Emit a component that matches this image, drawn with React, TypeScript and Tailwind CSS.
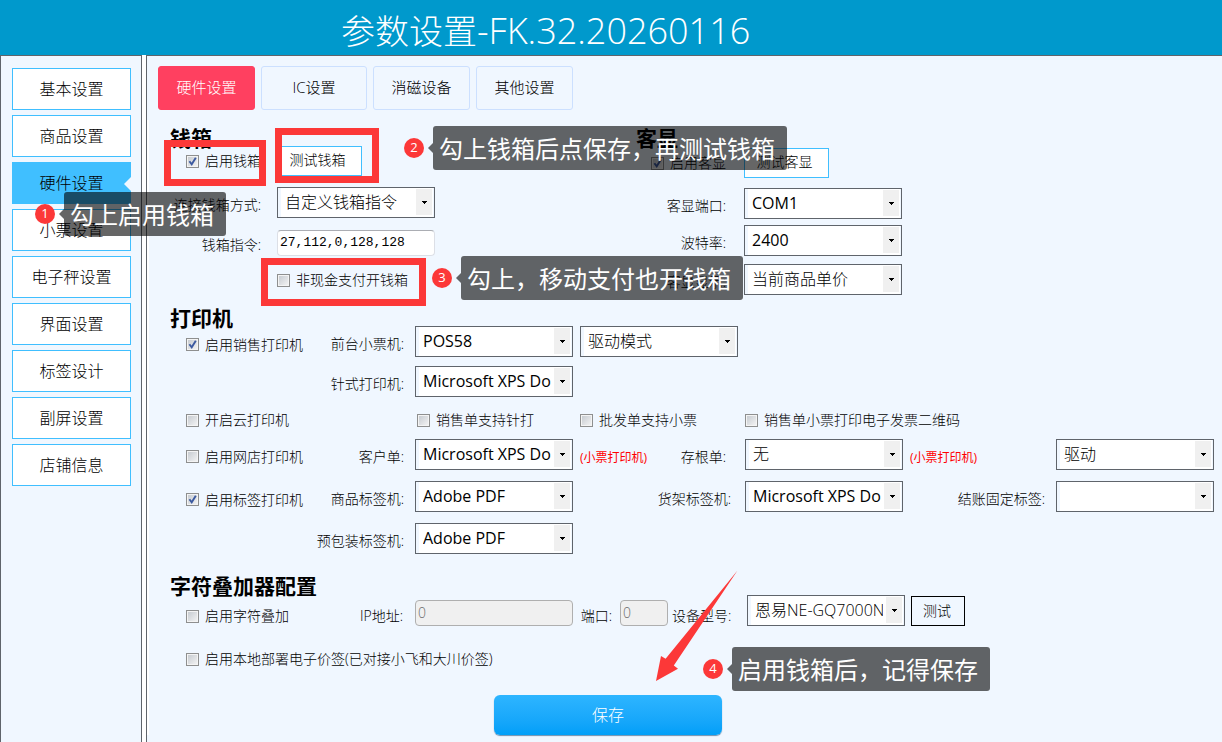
import React, { ReactNode } from "react";

const sideMenu = [
  "基本设置",
  "商品设置",
  "硬件设置",
  "小票设置",
  "电子秤设置",
  "界面设置",
  "标签设计",
  "副屏设置",
  "店铺信息",
];

const tabs = [
  { name: "硬件设置", width: "w-[97px]" },
  { name: "IC设置", width: "w-[106px]" },
  { name: "消磁设备", width: "w-[97px]" },
  { name: "其他设置", width: "w-[97px]" },
];

const printerRow =
  "grid grid-cols-[119px_110px_165px_165px_165px_146px_158px] items-center pl-4";

const Select = ({
  id,
  value,
  labelledBy,
  light = false,
}: {
  id: string;
  value: string;
  labelledBy?: string;
  light?: boolean;
}) => (
  <div className="relative h-[31px] w-[158px] shrink-0">
    <select
      id={id}
      aria-labelledby={labelledBy}
      className={`h-full w-full appearance-none border border-[#5f646b] bg-white pr-[21px] pb-px pl-[7px] text-base leading-5 text-black shadow-[inset_3px_0_0_#f0f7ff,inset_-1px_0_0_#f0f7ff] ${
        light ? "font-light" : "font-normal"
      }`}
    >
      <option>{value}</option>
    </select>
    <span className="pointer-events-none absolute top-[2px] right-[3px] bottom-[3px] flex w-4 items-center justify-center bg-[#f0f0f0]">
      <svg width="5" height="3" viewBox="0 0 5 3">
        <path d="M0 0H5V1H4V2H3V3H2V2H1V1H0Z" fill="#000" />
      </svg>
    </span>
  </div>
);

const CheckBox = ({
  id,
  label,
  checked = false,
}: {
  id: string;
  label: string;
  checked?: boolean;
}) => (
  <div className="flex items-center gap-[6px] whitespace-nowrap">
    <span className="relative flex h-[13px] w-[13px]">
      <input
        id={id}
        type="checkbox"
        defaultChecked={checked}
        className="peer h-[13px] w-[13px] appearance-none border border-[#8e8f8f] bg-linear-to-br from-[#c3c8ce] to-[#f6f6f6] shadow-[inset_0_0_0_1px_#f4f4f4]"
      />
      <svg
        className="pointer-events-none absolute top-0 left-0 hidden peer-checked:block"
        width="13"
        height="13"
        viewBox="0 0 13 13"
      >
        <path
          d="M3.4 6.2L5.7 9.3L9.8 2.8"
          fill="none"
          stroke="#3c5aa0"
          strokeWidth="1.9"
        />
      </svg>
    </span>
    <label htmlFor={id} className="text-sm leading-5">
      {label}
    </label>
  </div>
);

const FieldLabel = ({
  id,
  htmlFor,
  children,
}: {
  id?: string;
  htmlFor: string;
  children: ReactNode;
}) => (
  <label
    id={id}
    htmlFor={htmlFor}
    className="pt-1 text-right text-sm leading-5 whitespace-nowrap"
  >
    {children}
  </label>
);

const Title = ({ children }: { children: ReactNode }) => (
  <h2 className="text-[21px] leading-5 font-bold text-black">{children}</h2>
);

const Callout = ({
  no,
  text,
  place,
}: {
  no: number;
  text: string;
  place: string;
}) => (
  <div
    className={`pointer-events-none absolute flex items-center font-normal text-white ${place}`}
  >
    <span className="flex h-5 w-5 items-center justify-center rounded-full bg-[#fc3838] text-[13px]">
      {no}
    </span>
    <svg className="ml-1" width="5" height="10" viewBox="0 0 5 10">
      <path d="M5 0V10L0 5Z" fill="#000" fillOpacity="0.6" />
    </svg>
    <span className="h-11 rounded-[3px] bg-black/60 px-[6px] pr-3 text-2xl leading-[46px] whitespace-nowrap">
      {text}
    </span>
  </div>
);

const App = () => {
  return (
    <div className="relative flex min-h-screen flex-col bg-[#f0f7ff] font-['Open_Sans','Noto_Sans_CJK_SC',sans-serif] font-light text-black">
      <header className="h-[55px] bg-[#0099cc] pl-[341px]">
        <h1 className="text-[34px] leading-[62px] whitespace-nowrap text-white">
          参数设置<span className="text-4xl leading-[62px]">-FK.32.20260116</span>
        </h1>
      </header>

      <div className="flex flex-1">
        <nav className="flex w-[142px] shrink-0 flex-col gap-[5px] border-x border-t border-[#5f646b] px-[11px] pt-3">
          {sideMenu.map((item) => (
            <button
              key={item}
              className={`relative h-[42px] w-[119px] border border-[#40bfff] pb-px text-base text-black ${
                item === "硬件设置" ? "bg-[#40bfff]" : "bg-white"
              }`}
            >
              {item}
              {item === "硬件设置" && (
                <svg
                  className="absolute top-[14px] -right-px"
                  width="7"
                  height="14"
                  viewBox="0 0 7 14"
                >
                  <path d="M7 0V14L0 7Z" fill="#f0f7ff" />
                </svg>
              )}
            </button>
          ))}
        </nav>
        <div className="w-1 shrink-0 bg-white" />

        <main className="flex-1 border-t border-l border-[#5f646b] pt-[10px]">
          <div className="flex gap-[6px] pl-[11px]">
            {tabs.map((tab, i) => (
              <button
                key={tab.name}
                className={`h-11 rounded-[3px] border pb-px text-[15px] ${tab.width} ${
                  i === 0
                    ? "border-[#ff4060] bg-[#ff4060] text-white"
                    : "border-[#cce0ff] text-black"
                }`}
              >
                {tab.name}
              </button>
            ))}
          </div>

          <form className="mt-[10px] border-l-2 border-white pt-2 pl-[21px]">
            <div className="flex">
              <section className="w-[466px]">
                <Title>钱箱</Title>
                <div className="-mt-[2px] flex h-[30px] items-center pl-4">
                  <div className="w-[91px]">
                    <CheckBox id="box-on" label="启用钱箱" checked />
                  </div>
                  <button
                    type="button"
                    className="h-[30px] w-[85px] border border-[#40bfff] bg-white pr-1 pb-[2px] text-sm"
                  >
                    测试钱箱
                  </button>
                </div>
                <div className="mt-[11px] grid grid-cols-[91px_158px] items-center gap-x-4">
                  <FieldLabel htmlFor="box-mode">连接钱箱方式:</FieldLabel>
                  <Select id="box-mode" value="自定义钱箱指令" light />
                </div>
                <div className="mt-3 grid grid-cols-[91px_158px] items-center gap-x-4">
                  <FieldLabel htmlFor="box-cmd">钱箱指令:</FieldLabel>
                  <input
                    id="box-cmd"
                    defaultValue="27,112,0,128,128"
                    className="h-[26px] w-full rounded-sm border border-[#dcdfe6] border-t-[#abadb3] bg-white px-[2px] pb-[2px] font-['Liberation_Mono',monospace] text-[13px] font-normal text-black"
                  />
                </div>
                <div className="mt-[13px] flex h-[22px] items-center pl-[107px]">
                  <CheckBox id="box-noncash" label="非现金支付开钱箱" />
                </div>
              </section>

              <section>
                <Title>客显</Title>
                <div className="-mt-[2px] flex h-[34px] items-center pl-[15px]">
                  <div className="w-[93px]">
                    <CheckBox id="cd-on" label="启用客显" checked />
                  </div>
                  <button
                    type="button"
                    className="h-[30px] w-[85px] border border-[#40bfff] bg-white pr-1 pb-[2px] text-sm"
                  >
                    测试客显
                  </button>
                </div>
                <div className="mt-2 grid grid-cols-[90px_158px] items-center gap-x-[18px]">
                  <FieldLabel htmlFor="cd-port">客显端口:</FieldLabel>
                  <Select id="cd-port" value="COM1" />
                </div>
                <div className="mt-[6px] grid grid-cols-[90px_158px] items-center gap-x-[18px]">
                  <FieldLabel htmlFor="cd-baud">波特率:</FieldLabel>
                  <Select id="cd-baud" value="2400" />
                </div>
                <div className="mt-2 grid grid-cols-[90px_158px] items-center gap-x-[18px]">
                  <FieldLabel htmlFor="cd-text">客显显示:</FieldLabel>
                  <Select id="cd-text" value="当前商品单价" light />
                </div>
              </section>
            </div>

            <section className="mt-[13px]">
              <Title>打印机</Title>
              <div className={`-mt-[2px] ${printerRow}`}>
                <div className="pt-[6px]">
                  <CheckBox id="sale-on" label="启用销售打印机" checked />
                </div>
                <div className="flex justify-end pr-[11px]">
                  <FieldLabel id="front-label" htmlFor="front">
                    前台小票机:
                  </FieldLabel>
                </div>
                <Select id="front" value="POS58" />
                <Select
                  id="front-mode"
                  value="驱动模式"
                  labelledBy="front-label"
                  light
                />
              </div>
              <div className={`mt-[9px] ${printerRow}`}>
                <div className="col-start-2 flex justify-end pr-[11px]">
                  <FieldLabel htmlFor="dot">针式打印机:</FieldLabel>
                </div>
                <Select id="dot" value="Microsoft XPS Document Writer" />
              </div>
              <div className={`mt-3 h-[22px] ${printerRow}`}>
                <CheckBox id="cloud-on" label="开启云打印机" />
                <div className="col-start-3 pl-[2px]">
                  <CheckBox id="sale-dot" label="销售单支持针打" />
                </div>
                <CheckBox id="batch" label="批发单支持小票" />
                <CheckBox id="qr" label="销售单小票打印电子发票二维码" />
              </div>
              <div className={`mt-2 ${printerRow}`}>
                <div className="pt-1">
                  <CheckBox id="shop-on" label="启用网店打印机" />
                </div>
                <div className="flex justify-end pr-[11px]">
                  <FieldLabel htmlFor="customer">客户单:</FieldLabel>
                </div>
                <Select id="customer" value="Microsoft XPS Document Writer" />
                <div className="flex items-center justify-between pr-[19px]">
                  <span className="pt-[6px] text-xs font-normal text-[#ff0000]">
                    (小票打印机)
                  </span>
                  <FieldLabel id="stub-label" htmlFor="stub">
                    存根单:
                  </FieldLabel>
                </div>
                <Select id="stub" value="无" light />
                <span className="pt-[6px] text-xs font-normal text-[#ff0000]">
                  (小票打印机)
                </span>
                <Select
                  id="stub-mode"
                  value="驱动"
                  labelledBy="stub-label"
                  light
                />
              </div>
              <div className={`mt-[11px] ${printerRow}`}>
                <div className="pt-[6px]">
                  <CheckBox id="tag-on" label="启用标签打印机" checked />
                </div>
                <div className="flex justify-end pr-[11px]">
                  <FieldLabel htmlFor="goods-tag">商品标签机:</FieldLabel>
                </div>
                <Select id="goods-tag" value="Adobe PDF" />
                <div className="flex justify-end pr-[14px]">
                  <FieldLabel htmlFor="shelf-tag">货架标签机:</FieldLabel>
                </div>
                <Select id="shelf-tag" value="Microsoft XPS Document Writer" />
                <div className="flex justify-end pr-[11px]">
                  <FieldLabel htmlFor="pay-tag">结账固定标签:</FieldLabel>
                </div>
                <Select id="pay-tag" value="" />
              </div>
              <div className={`mt-[11px] ${printerRow}`}>
                <div className="col-start-2 flex justify-end pr-[11px]">
                  <FieldLabel htmlFor="pack-tag">预包装标签机:</FieldLabel>
                </div>
                <Select id="pack-tag" value="Adobe PDF" />
              </div>
            </section>

            <section className="mt-[22px]">
              <Title>字符叠加器配置</Title>
              <div className="-mt-px flex h-[31px] items-end pl-4">
                <div className="w-[119px]">
                  <CheckBox id="osd-on" label="启用字符叠加" />
                </div>
                <div className="flex w-[110px] justify-end pr-3">
                  <FieldLabel htmlFor="osd-ip">IP地址:</FieldLabel>
                </div>
                <input
                  id="osd-ip"
                  disabled
                  defaultValue="0"
                  className="h-[26px] w-[158px] rounded-sm border border-[#afafaf] bg-[#f0f0f0] px-[2px] pb-[2px] text-sm leading-5 text-[#6d6d6d]"
                />
                <div className="flex w-[47px] justify-center">
                  <FieldLabel htmlFor="osd-port">端口:</FieldLabel>
                </div>
                <input
                  id="osd-port"
                  disabled
                  defaultValue="0"
                  className="h-[26px] w-12 rounded-sm border border-[#afafaf] bg-[#f0f0f0] px-[2px] pb-[2px] text-sm leading-5 text-[#6d6d6d]"
                />
                <div className="flex w-[79px] pl-1">
                  <FieldLabel htmlFor="osd-model">设备型号:</FieldLabel>
                </div>
                <Select id="osd-model" value="恩易NE-GQ7000N-X" light />
                <button
                  type="button"
                  className="ml-[6px] h-[30px] w-[54px] border border-black pr-[2px] text-sm"
                >
                  测试
                </button>
              </div>
              <div className="mt-[22px] flex h-[22px] items-center pl-4">
                <CheckBox
                  id="esl-on"
                  label="启用本地部署电子价签(已对接小飞和大川价签)"
                />
              </div>
            </section>

            <button
              type="button"
              className="mt-[25px] ml-[324px] block h-[40px] w-[228px] rounded-md bg-linear-to-b from-[#2db5ff] to-[#009ff8] text-base text-white shadow-[0_1px_1px_#6d8fae]"
            >
              保存
            </button>
          </form>
        </main>
      </div>

      {/* highlight frames */}
      <div className="pointer-events-none absolute top-[140px] left-[164px] h-[46px] w-[102px] border-[7px] border-[#fc3838]" />
      <div className="pointer-events-none absolute top-[128px] left-[275px] h-[55px] w-[104px] border-[7px] border-[#fc3838]" />
      <div className="pointer-events-none absolute top-[258px] left-[261px] h-[48px] w-[165px] border-[7px] border-[#fc3838]" />

      {/* step notes */}
      <Callout no={1} text="勾上启用钱箱" place="top-[192px] left-[35px]" />
      <Callout
        no={2}
        text="勾上钱箱后点保存，再测试钱箱"
        place="top-[126px] left-[404px]"
      />
      <Callout
        no={3}
        text="勾上，移动支付也开钱箱"
        place="top-[256px] left-[432px]"
      />
      <Callout
        no={4}
        text="启用钱箱后，记得保存"
        place="top-[647px] left-[703px]"
      />

      <svg
        className="pointer-events-none absolute top-[570px] left-[655px]"
        width="84"
        height="112"
        viewBox="0 0 84 112"
      >
        <path
          d="M82.5 0.5L18.8 95.4L23 98.8L1 111L6 86L10.6 88.8Z"
          fill="#fc3838"
        />
      </svg>
    </div>
  );
};

export default App;
